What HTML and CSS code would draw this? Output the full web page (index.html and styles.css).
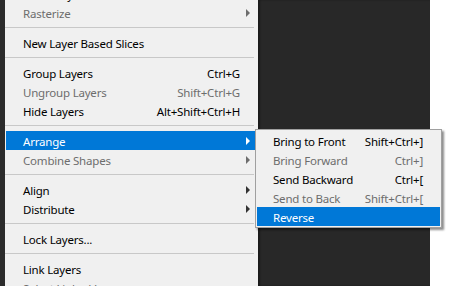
FILE: index.html
```html
<!DOCTYPE html>
<html lang="en">
<head>
  <meta charset="UTF-8" />
  <title>Layer Menu</title>
  <link rel="stylesheet" href="styles.css">
</head>
<body>
  <div class="screen">
    <div class="edge"></div>

    <div class="menu">
      <div class="menu-list">
        <div class="item"><span class="label">Video Layers</span><span class="arrow-cell"><i class="arrow"></i></span></div>
        <div class="item disabled"><span class="label">Rasterize</span><span class="arrow-cell"><i class="arrow"></i></span></div>
        <div class="sep"></div>
        <div class="item"><span class="label">New Layer Based Slices</span><span class="arrow-cell"></span></div>
        <div class="sep"></div>
        <div class="item"><span class="label">Group Layers</span><span class="key">Ctrl+G</span><span class="arrow-cell"></span></div>
        <div class="item disabled"><span class="label">Ungroup Layers</span><span class="key">Shift+Ctrl+G</span><span class="arrow-cell"></span></div>
        <div class="item"><span class="label">Hide Layers</span><span class="key">Alt+Shift+Ctrl+H</span><span class="arrow-cell"></span></div>
        <div class="sep"></div>
        <div class="item active"><span class="label">Arrange</span><span class="arrow-cell"><i class="arrow"></i></span></div>
        <div class="item disabled"><span class="label">Combine Shapes</span><span class="arrow-cell"><i class="arrow"></i></span></div>
        <div class="sep"></div>
        <div class="item"><span class="label">Align</span><span class="arrow-cell"><i class="arrow"></i></span></div>
        <div class="item"><span class="label">Distribute</span><span class="arrow-cell"><i class="arrow"></i></span></div>
        <div class="sep"></div>
        <div class="item"><span class="label">Lock Layers...</span><span class="arrow-cell"></span></div>
        <div class="sep"></div>
        <div class="item"><span class="label">Link Layers</span><span class="arrow-cell"></span></div>
        <div class="item disabled"><span class="label">Select Linked Layers</span><span class="arrow-cell"></span></div>
      </div>
    </div>

    <div class="canvas"></div>
    <div class="paper"></div>

    <div class="submenu">
      <div class="item"><span class="label">Bring to Front</span><span class="key">Shift+Ctrl+]</span></div>
      <div class="item disabled"><span class="label">Bring Forward</span><span class="key">Ctrl+]</span></div>
      <div class="item"><span class="label">Send Backward</span><span class="key">Ctrl+[</span></div>
      <div class="item disabled"><span class="label">Send to Back</span><span class="key">Shift+Ctrl+[</span></div>
      <div class="item active"><span class="label">Reverse</span></div>
    </div>
  </div>
</body>
</html>
```

FILE: styles.css
```css
body {
  margin: 0;
  font-family: 'Noto Sans', 'Open Sans', sans-serif;
  font-size: 11.5px;
  letter-spacing: -0.2px;
  color: #000;
}

.screen {
  position: relative;
  display: flex;
  height: 286px;
  overflow: hidden;
  background: #fff;
}

.edge {
  width: 5px;
  background: #2b2b2b;
}

.menu {
  width: 253px;
  box-sizing: border-box;
  padding: 0 3px 0 1px;
  background: #f0f0f0;
  overflow: hidden;
}

.menu-list {
  margin-top: -16px;
}

.item {
  display: flex;
  align-items: center;
  height: 19px;
  padding-left: 17px;
  padding-top: 1px;
  box-sizing: border-box;
  white-space: nowrap;
}

.label {
  flex: 1;
}

.arrow-cell {
  width: 15px;
  display: flex;
  align-items: center;
  padding-left: 6px;
  box-sizing: border-box;
}

.arrow {
  width: 0;
  height: 0;
  border-left: 4px solid #333;
  border-top: 4px solid transparent;
  border-bottom: 4px solid transparent;
}

.disabled {
  color: #6d6d6d;
}

.disabled .arrow {
  border-left-color: #6d6d6d;
}

.active {
  background: #0078d7;
  color: #fff;
}

.active .arrow {
  border-left-color: #fff;
}

.sep {
  height: 1px;
  margin: 5px 1px 5px -1px;
  background: #c8c8c8;
}

.canvas {
  width: 172px;
  background: #282828;
  box-shadow: inset 2px 0 2px rgba(0, 0, 0, 0.35);
}

.paper {
  flex: 1;
  background: #fff;
}

.submenu {
  position: absolute;
  left: 255px;
  top: 129px;
  width: 187px;
  box-sizing: border-box;
  padding: 1px;
  border: 1px solid #a0a0a0;
  background: #f0f0f0;
  box-shadow: 2px 2px 2px rgba(0, 0, 0, 0.45);
}

.submenu .item {
  padding-left: 16px;
  padding-right: 17px;
}
```
